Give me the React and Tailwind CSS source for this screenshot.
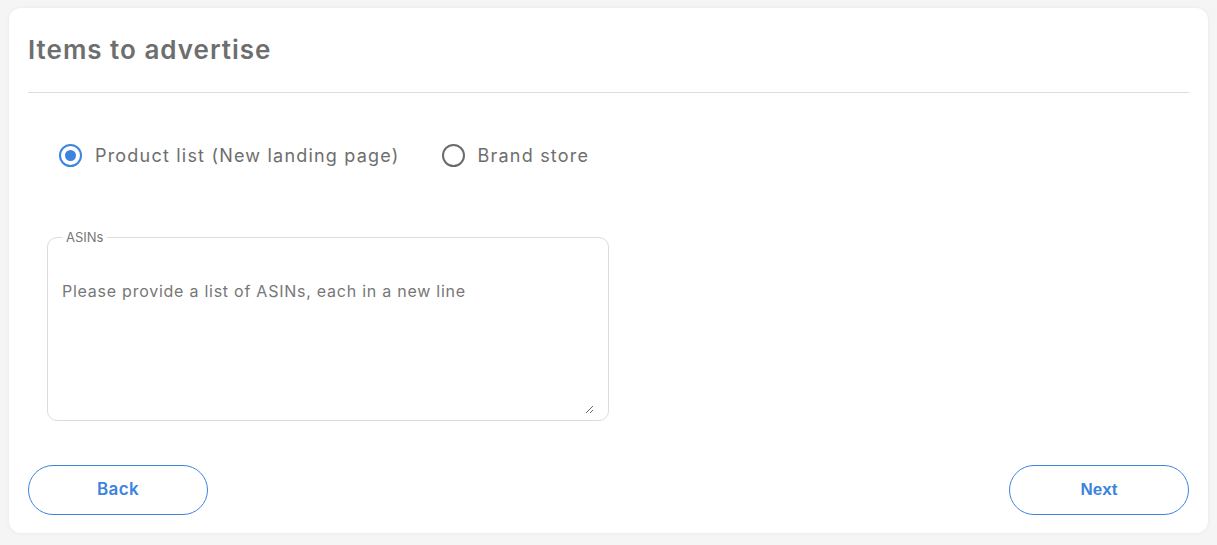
import React, { useState } from "react";

// Campaign step: choose what to advertise
export default function App() {
  const [mode, setMode] = useState("list");
  const [asins, setAsins] = useState("");

  return (
    <div
      className="min-h-[545px] bg-[#f5f5f5] pl-[9px] pr-[9px] pt-[8px] pb-[12px]"
      style={{ fontFamily: "Inter, 'Noto Sans', sans-serif" }}
    >
      <div className="flex h-[525px] flex-col rounded-[12px] bg-white px-[19px] shadow-[0_0_4px_rgba(0,0,0,0.06)]">
        <div className="flex h-[85px] items-center border-b border-[#dedede] pb-[2px]">
          <h1 className="text-[26px] font-semibold tracking-[1px] text-[#6e6e6e]">Items to advertise</h1>
        </div>

        <div className="mt-[49px] flex items-center gap-[42px] pl-[31px]">
          <Radio label="Product list (New landing page)" checked={mode === "list"} onClick={() => setMode("list")} />
          <Radio label="Brand store" checked={mode === "store"} onClick={() => setMode("store")} />
        </div>

        <fieldset className="mt-[59px] ml-[19px] h-[193px] w-[562px] rounded-[10px] border border-[#dcdcdc] px-[14px] pb-[6px]">
          <legend className="px-[4px] text-[13px] text-[#777]">ASINs</legend>
          <textarea
            value={asins}
            onChange={(e) => setAsins(e.target.value)}
            placeholder="Please provide a list of ASINs, each in a new line"
            className="mt-[31px] h-[135px] w-full resize-y text-[16px] tracking-[0.75px] text-[#555] outline-none placeholder:text-[#777]"
          />
        </fieldset>

        <div className="mt-auto mb-[18px] flex items-center justify-between">
          <button className="h-[50px] w-[180px] rounded-full border border-[#3d83e0] text-[17px] font-semibold tracking-[0.4px] text-[#3d83e0]">
            Back
          </button>
          <button
            className="h-[50px] w-[180px] rounded-full border border-[#3d83e0] text-[17px] font-bold text-[#3d83e0]"
            style={{ fontFamily: "'Liberation Sans', Arial, sans-serif" }}
          >
            Next
          </button>
        </div>
      </div>
    </div>
  );
}

function Radio({ label, checked, onClick }) {
  return (
    <button onClick={onClick} className="flex items-center gap-[13px]">
      <span
        className={
          checked
            ? "flex h-[23px] w-[23px] items-center justify-center rounded-full border-2 border-[#3d83e0]"
            : "flex h-[23px] w-[23px] items-center justify-center rounded-full border-2 border-[#6b6b6b]"
        }
      >
        {checked && <span className="h-[11px] w-[11px] rounded-full bg-[#3d83e0]" />}
      </span>
      <span className="text-[18px] tracking-[1.2px] text-[#6e6e6e]">{label}</span>
    </button>
  );
}
